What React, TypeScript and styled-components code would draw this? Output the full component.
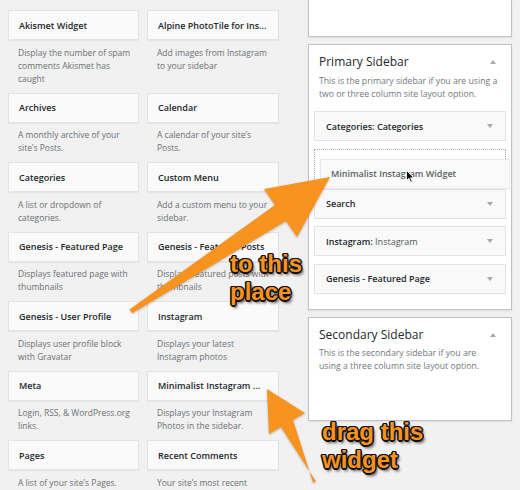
import React from 'react'
import styled, { createGlobalStyle } from 'styled-components'

type Widget = {
    title: string
    lines: string[]
}

const GlobalStyle = createGlobalStyle`
  html, body {
    margin: 0;
    padding: 0;
    background: #f1f1f1;
  }
  body {
    font-family: "Open Sans", "Noto Sans", sans-serif;
  }
`

const Page = styled.div`
  position: relative;
  width: 520px;
  height: 490px;
  overflow: hidden;
  display: flex;
  align-items: flex-start;
  gap: 29px;
  padding-left: 8px;
  box-sizing: border-box;
`

const WidgetGrid = styled.div`
  display: grid;
  grid-template-columns: 131px 132px;
  column-gap: 8px;
  padding-top: 10px;
`

const WidgetCard = styled.div`
  height: 30px;
  box-sizing: border-box;
  display: flex;
  align-items: center;
  padding: 0 10px;
  border: 1px solid #e3e3e3;
  background: #fafafa;
  box-shadow: 0 1px 1px rgba(0, 0, 0, 0.04);
  font-size: 9px;
  font-weight: 600;
  color: #23282d;
  white-space: nowrap;
  overflow: hidden;
`

const WidgetDesc = styled.div`
  padding: 5.5px 10px 8px;
  font-size: 8.5px;
  line-height: 13px;
  color: #6b7075;
  white-space: nowrap;
`

const SideColumn = styled.div`
  width: 204px;
  display: flex;
  flex-direction: column;
  gap: 7px;
`

const SidebarBox = styled.div<{ $height?: number; $noTop?: boolean }>`
  box-sizing: border-box;
  ${(p) => (p.$height ? `height: ${p.$height}px;` : '')}
  background: #fff;
  border: 1px solid #bfc1c4;
  ${(p) => (p.$noTop ? 'border-top: none;' : '')}
  box-shadow: 0 1px 2px rgba(0, 0, 0, 0.08);
  padding: 0 5px 7.5px;
`

const SidebarHeader = styled.div`
  display: flex;
  justify-content: space-between;
  align-items: center;
  padding: 8px 10px 0 5px;
  height: 18px;
`

const SidebarTitle = styled.span`
  font-size: 12px;
  line-height: 18px;
  color: #23282d;
`

const Caret = styled.span<{ $up?: boolean }>`
  width: 0;
  height: 0;
  border-left: 3px solid transparent;
  border-right: 3px solid transparent;
  ${(p) => (p.$up ? 'border-bottom: 4px solid #a7aaad;' : 'border-top: 4px solid #a7aaad;')}
`

const SidebarDesc = styled.div`
  padding: 3.5px 5px 0;
  margin-bottom: 10.5px;
  font-size: 8.7px;
  line-height: 13px;
  color: #72777c;
  white-space: nowrap;
`

const SidebarWidget = styled.div`
  height: 30px;
  box-sizing: border-box;
  margin-bottom: 7.5px;
  display: flex;
  justify-content: space-between;
  align-items: center;
  padding: 0 12px 0 11px;
  border: 1px solid #e3e3e3;
  background: #f9f9f9;
  font-size: 9px;
  font-weight: 600;
  color: #23282d;
`

const InTitle = styled.span<{ $light?: boolean }>`
  font-weight: ${(p) => (p.$light ? 400 : 600)};
  color: ${(p) => (p.$light ? '#50575e' : '#23282d')};
`

const DropPlaceholder = styled.div`
  position: relative;
  height: 38px;
  box-sizing: border-box;
  margin-bottom: 2px;
  border: 1px dotted #a7aaad;
`

const DragHelper = styled.div`
  position: absolute;
  left: 5px;
  top: 9px;
  width: 190px;
  height: 30px;
  box-sizing: border-box;
  display: flex;
  align-items: center;
  padding-left: 10px;
  background: rgba(250, 250, 250, 0.85);
  border: 1px solid #e8e8e8;
  font-size: 9px;
  font-weight: 600;
  color: #5a5f64;
  white-space: nowrap;
`

const Pointer = styled.svg`
  position: absolute;
  left: 85px;
  top: 10px;
`

const ArrowLayer = styled.svg`
  position: absolute;
  left: 0;
  top: 0;
  pointer-events: none;
  filter: drop-shadow(0.5px 1px 1px rgba(0, 0, 0, 0.25));
`

const Callout = styled.div<{ $x: number; $y: number }>`
  position: absolute;
  left: ${(p) => p.$x}px;
  top: ${(p) => p.$y}px;
  font-family: "Liberation Sans", Arial, sans-serif;
  font-weight: 700;
  font-size: 24px;
  line-height: 28px;
  color: #f7931e;
  white-space: nowrap;
  text-shadow:
    1.5px 0 0 #111, -1.5px 0 0 #111, 0 1.5px 0 #111, 0 -1.5px 0 #111,
    1px 1px 0 #111, -1px -1px 0 #111, 1px -1px 0 #111, -1px 1px 0 #111,
    2px 2.5px 3px rgba(0, 0, 0, 0.7);
`

const widgets: Widget[] = [
    { title: 'Akismet Widget', lines: ['Display the number of spam', 'comments Akismet has', 'caught'] },
    { title: 'Alpine PhotoTile for Ins...', lines: ['Add images from Instagram', 'to your sidebar'] },
    { title: 'Archives', lines: ['A monthly archive of your', 'site\u2019s Posts.'] },
    { title: 'Calendar', lines: ['A calendar of your site\u2019s', 'Posts.'] },
    { title: 'Categories', lines: ['A list or dropdown of', 'categories.'] },
    { title: 'Custom Menu', lines: ['Add a custom menu to your', 'sidebar.'] },
    { title: 'Genesis - Featured Page', lines: ['Displays featured page with', 'thumbnails'] },
    { title: 'Genesis - Featured Posts', lines: ['Displays featured posts with', 'thumbnails'] },
    { title: 'Genesis - User Profile', lines: ['Displays user profile block', 'with Gravatar'] },
    { title: 'Instagram', lines: ['Displays your latest', 'Instagram photos'] },
    { title: 'Meta', lines: ['Login, RSS, & WordPress.org', 'links.'] },
    { title: 'Minimalist Instagram ...', lines: ['Displays your Instagram', 'Photos in the sidebar.'] },
    { title: 'Pages', lines: ['A list of your site\u2019s Pages.'] },
    { title: 'Recent Comments', lines: ['Your site\u2019s most recent', 'comments.'] },
]

const App = () => {
    return (
        <Page>
            <GlobalStyle />
            <WidgetGrid>
                {widgets.map((w, index) => (
                    <div key={index}>
                        <WidgetCard>{w.title}</WidgetCard>
                        <WidgetDesc>
                            {w.lines.map((line, i) => (
                                <div key={i}>{line}</div>
                            ))}
                        </WidgetDesc>
                    </div>
                ))}
            </WidgetGrid>

            <SideColumn>
                <SidebarBox $height={37} $noTop />

                <SidebarBox>
                    <SidebarHeader>
                        <SidebarTitle>Primary Sidebar</SidebarTitle>
                        <Caret $up />
                    </SidebarHeader>
                    <SidebarDesc>
                        <div>This is the primary sidebar if you are using a</div>
                        <div>two or three column site layout option.</div>
                    </SidebarDesc>
                    <SidebarWidget>
                        <span>Categories: <InTitle>Categories</InTitle></span>
                        <Caret />
                    </SidebarWidget>
                    <DropPlaceholder>
                        <DragHelper>
                            Minimalist Instagram Widget
                            <Pointer width="9" height="13" viewBox="0 0 9 13">
                                <path d="M0.5 0.5 L0.5 10.5 L3 8.3 L4.8 12.3 L6.3 11.6 L4.6 7.8 L7.8 7.8 Z" fill="#111" stroke="#fff" strokeWidth="0.8" />
                            </Pointer>
                        </DragHelper>
                    </DropPlaceholder>
                    <SidebarWidget>
                        <span>Search</span>
                        <Caret />
                    </SidebarWidget>
                    <SidebarWidget>
                        <span>Instagram: <InTitle $light>Instagram</InTitle></span>
                        <Caret />
                    </SidebarWidget>
                    <SidebarWidget>
                        <span>Genesis - Featured Page</span>
                        <Caret />
                    </SidebarWidget>
                </SidebarBox>

                <SidebarBox $height={104}>
                    <SidebarHeader>
                        <SidebarTitle>Secondary Sidebar</SidebarTitle>
                        <Caret $up />
                    </SidebarHeader>
                    <SidebarDesc>
                        <div>This is the secondary sidebar if you are</div>
                        <div>using a three column site layout option.</div>
                    </SidebarDesc>
                </SidebarBox>
            </SideColumn>

            <ArrowLayer width="520" height="490" viewBox="0 0 520 490">
                <polygon
                    points="129.5,309.5 275,205 264,189 330,177 297,237 286,221 132.5,313"
                    fill="#f7931e"
                />
                <polygon
                    points="313,482.5 293,420 305,413 267,389 269,434 281,427 316,481.5"
                    fill="#f7931e"
                />
            </ArrowLayer>

            <Callout $x={230} $y={250}>
                to this
                <br />
                place
            </Callout>
            <Callout $x={322} $y={418}>
                drag this
                <br />
                widget
            </Callout>
        </Page>
    )
}

export default App
